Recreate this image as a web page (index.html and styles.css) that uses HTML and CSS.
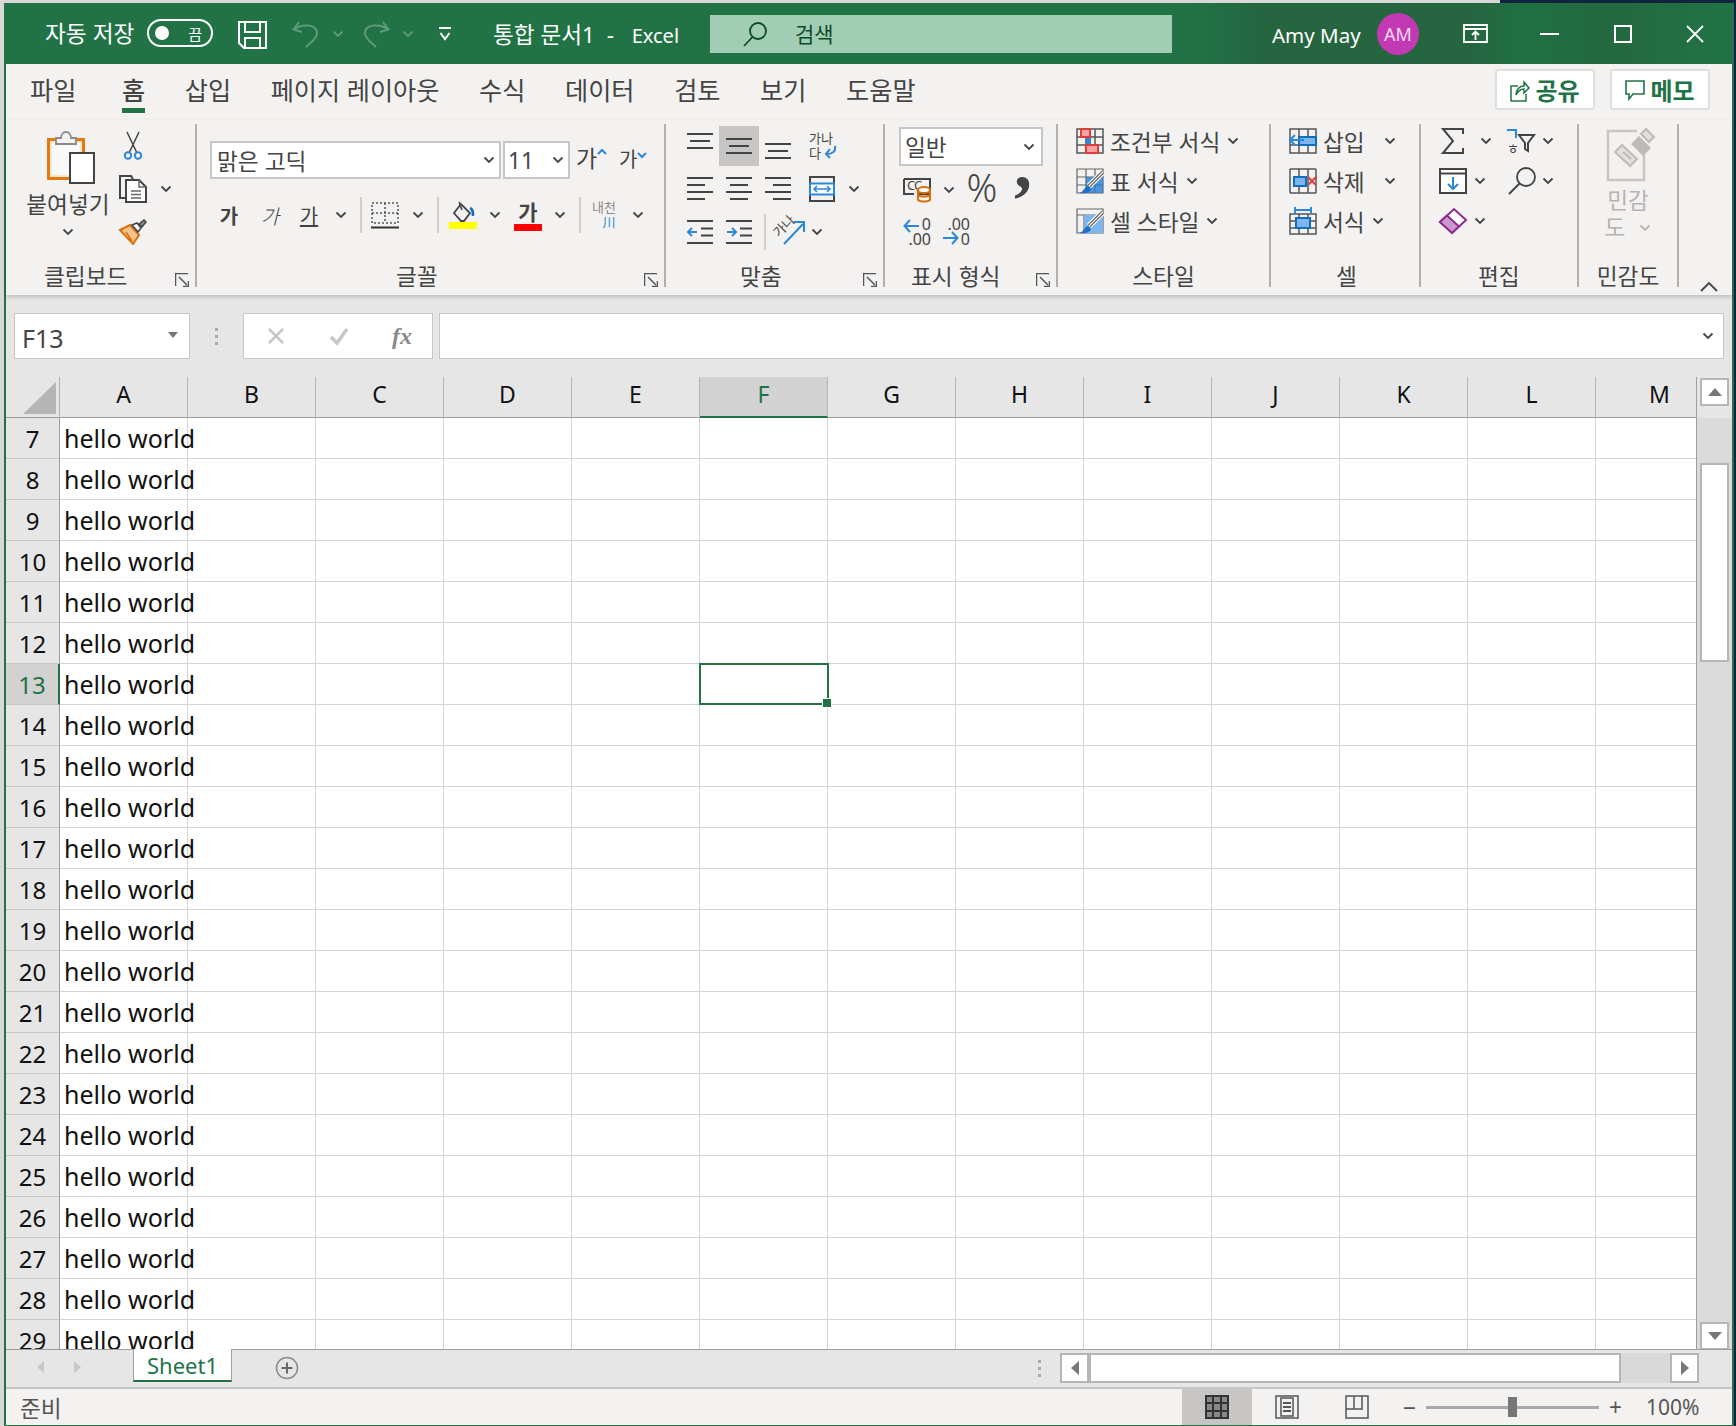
FILE: index.html
```html
<!DOCTYPE html>
<html lang="ko">
<head>
	<meta charset="UTF-8">
	<title>통합 문서1 - Excel</title>
	<link rel="stylesheet" href="styles.css">
</head>
<body>
<svg class="sprite">
	<symbol id="chev" viewBox="0 0 12 8"><path d="M1.5 1.5 6 6l4.5-4.5" fill="none" stroke="currentColor" stroke-width="1.8"/></symbol>
	<symbol id="launcher" viewBox="0 0 14 14"><path d="M.5 13V.5H13M13.500 8v5.500H8M4 4l8 8" fill="none" stroke="#555" stroke-width="1.500"/></symbol>
</svg>
<div class="window">
	<!-- title bar -->
	<div class="titlebar">
		<span class="autosave">자동 저장</span>
		<span class="toggle"><i></i><b>끔</b></span>
		<svg class="t-save" width="29" height="28" viewBox="0 0 29 28"><path d="M1 1h27v26H6l-5-5zM7 1v10h15V1M7 27V17h15v10M7 17h15" fill="none" stroke="#fff" stroke-width="2"/></svg>
		<svg class="t-undo" width="27" height="28" viewBox="0 0 27 28"><path d="M7 2 1.500 9.500 10 12M2 9.500C8 4 25 3 25 13c0 6-7 10-11 14" fill="none" stroke="#5d9b7a" stroke-width="2"/></svg>
		<svg class="t-chev1 chev dim"><use href="#chev"/></svg>
		<svg class="t-redo" width="27" height="28" viewBox="0 0 27 28"><path d="M20 2l5.500 7.500L17 12M25 9.500C19 4 2 3 2 13c0 6 7 10 11 14" fill="none" stroke="#5d9b7a" stroke-width="2"/></svg>
		<svg class="t-chev2 chev dim"><use href="#chev"/></svg>
		<svg class="t-custom" width="14" height="16" viewBox="0 0 14 16"><path d="M1 2h12" stroke="#fff" stroke-width="2"/><path d="M2.500 7 7 13l4.500-6" fill="none" stroke="#fff" stroke-width="2"/></svg>
		<span class="doc-title">통합 문서1&nbsp; - &nbsp;<span class="app-name">Excel</span></span>
		<div class="search">
			<svg width="26" height="26" viewBox="0 0 26 26"><circle cx="16" cy="10" r="8" fill="none" stroke="#0d4a2a" stroke-width="1.800"/><path d="M10.500 16 2 25" stroke="#0d4a2a" stroke-width="1.800"/></svg>
			<span>검색</span>
		</div>
		<span class="user">Amy May</span>
		<span class="avatar">AM</span>
		<svg class="t-display" width="25" height="19" viewBox="0 0 25 19"><path d="M1 1h23v17H1zM1 5h23M12.500 16V8M9 11l3.500-3.500L16 11" fill="none" stroke="#fff" stroke-width="1.800"/></svg>
		<svg class="t-min" width="19" height="2" viewBox="0 0 19 2"><path d="M0 1h19" stroke="#fff" stroke-width="2"/></svg>
		<svg class="t-max" width="18" height="18" viewBox="0 0 18 18"><path d="M1 1h16v16H1z" fill="none" stroke="#fff" stroke-width="2"/></svg>
		<svg class="t-close" width="18" height="18" viewBox="0 0 18 18"><path d="M1 1l16 16M17 1 1 17" stroke="#fff" stroke-width="1.800"/></svg>
	</div>

	<!-- ribbon tabs -->
	<div class="tabs">
		<a class="tab first">파일</a>
		<a class="tab active">홈</a>
		<a class="tab">삽입</a>
		<a class="tab">페이지 레이아웃</a>
		<a class="tab">수식</a>
		<a class="tab">데이터</a>
		<a class="tab">검토</a>
		<a class="tab">보기</a>
		<a class="tab">도움말</a>
		<div class="tab-actions">
			<button class="pill"><svg width="20" height="24" viewBox="0 0 20 24"><path d="M8 8H1v15h15v-7" fill="none" stroke="#217346" stroke-width="1.500"/><path d="M6 17c0-6 4-9 8-9V4l5 6-5 5v-4c-3 0-6 2-8 6z" fill="none" stroke="#217346" stroke-width="1.500"/></svg>공유</button>
			<button class="pill"><svg width="20" height="24" viewBox="0 0 20 24"><path d="M1 3h18v13H8l-4 5v-5H1z" fill="none" stroke="#217346" stroke-width="1.600"/></svg>메모</button>
		</div>
	</div>

	<!-- ribbon -->
	<div class="ribbon">
		<section class="group g-clip">
			<div class="group-body clip-body">
				<div class="paste">
					<svg width="48" height="54" viewBox="0 0 48 54"><path d="M1.500 9.500h35v39h-35z" fill="#fbe7c8" stroke="#e07b12" stroke-width="3"/><path d="M5 13h28v32H5z" fill="#f8f8f8"/><path d="M9 14V8h5c0-8 10-8 10 0h5v6z" fill="#f3f2f1" stroke="#8a8a8a" stroke-width="1.800"/><path d="M23 23h24v30H23z" fill="#fff" stroke="#444" stroke-width="2"/></svg>
					<span class="paste-label">붙여넣기</span>
					<svg class="chev"><use href="#chev"/></svg>
				</div>
				<div class="clip-tools">
					<span class="cmd"><svg width="18" height="28" viewBox="0 0 18 28"><path d="M3 0l9.500 20M15 0 5.500 20" fill="none" stroke="#444" stroke-width="1.500"/><circle cx="4" cy="23.500" r="3.200" fill="none" stroke="#2b88d8" stroke-width="2"/><circle cx="14" cy="23.500" r="3.200" fill="none" stroke="#2b88d8" stroke-width="2"/></svg></span>
					<span></span>
					<span class="cmd"><svg width="28" height="28" viewBox="0 0 28 28"><path d="M8 23H1V1h11l2 3" fill="none" stroke="#444" stroke-width="2"/><path d="M7 5h13l7 7v15H7z" fill="#fff" stroke="#444" stroke-width="2"/><path d="M20 5v7h7M12 16h10M12 19.500h10M12 23h10" fill="none" stroke="#666" stroke-width="1.500"/></svg></span>
					<span class="cmd"><svg class="chev"><use href="#chev"/></svg></span>
					<span class="cmd"><svg width="28" height="26" viewBox="0 0 28 26"><path d="M1 11l10-5 9 10-6 9z" fill="#f7c68f" stroke="#dc6f0c" stroke-width="2"/><path d="M7 13l6 9" stroke="#dc6f0c" stroke-width="1.500"/><path d="M13 6l5-2 4 5-3 4z" fill="#fff" stroke="#444" stroke-width="1.500"/><path d="M20 5l5-4 2 2-4 5z" fill="#888" stroke="#444" stroke-width="1.500"/></svg></span>
				</div>
			</div>
			<div class="group-foot"><span class="label">클립보드</span><svg class="launcher"><use href="#launcher"/></svg></div>
		</section>

		<section class="group g-font">
			<div class="group-body font-body">
				<div class="font-row1">
					<div class="combo font-name"><span>맑은 고딕</span><svg class="chev"><use href="#chev"/></svg></div>
					<div class="combo font-size"><span>11</span><svg class="chev"><use href="#chev"/></svg></div>
					<span class="grow">가<svg width="10" height="7" viewBox="0 0 10 7"><path d="M1 6l4-4 4 4" fill="none" stroke="#2b88d8" stroke-width="2"/></svg></span>
					<span class="grow shrink">가<svg width="10" height="7" viewBox="0 0 10 7"><path d="M1 1l4 4 4-4" fill="none" stroke="#2b88d8" stroke-width="2"/></svg></span>
				</div>
				<div class="font-row2">
					<span class="cmd glyph bold">가</span>
					<span class="cmd glyph italic">가</span>
					<span class="cmd glyph under">가</span>
					<span class="cmd"><svg class="chev"><use href="#chev"/></svg></span>
					<span class="cmd"><i class="vsep"></i></span>
					<span class="cmd"><svg width="28" height="27" viewBox="0 0 28 27"><path d="M1 1h26v20H1zM14 1v20M1 11h26" fill="none" stroke="#555" stroke-width="1.500" stroke-dasharray="2 2"/><path d="M0 25.500h28" stroke="#333" stroke-width="2"/></svg></span>
					<span class="cmd"><svg class="chev"><use href="#chev"/></svg></span>
					<span class="cmd"><i class="vsep"></i></span>
					<span class="cmd"><svg width="28" height="28" viewBox="0 0 28 28"><path d="M5 12 12 3l9 9-6 8h-3z" fill="none" stroke="#444" stroke-width="1.800"/><path d="M10 1l3 8" stroke="#444" stroke-width="1.500"/><path d="M21 7c3 1 3 4 3 8" fill="none" stroke="#106ebe" stroke-width="2.500"/><path d="M0 21h28v7H0z" fill="#ff0"/></svg></span>
					<span class="cmd"><svg class="chev"><use href="#chev"/></svg></span>
					<span class="cmd color-a">가<i></i></span>
					<span class="cmd"><svg class="chev"><use href="#chev"/></svg></span>
					<span class="cmd"><i class="vsep"></i></span>
					<span class="cmd phon">내천<b>川</b></span>
					<span class="cmd"><svg class="chev"><use href="#chev"/></svg></span>
				</div>
			</div>
			<div class="group-foot"><span class="label">글꼴</span><svg class="launcher"><use href="#launcher"/></svg></div>
		</section>

		<section class="group g-align">
			<div class="group-body align-body">
				<span class="cmd"><svg class="al" viewBox="0 0 26 26"><path d="M0 1h26M3 8h20M0 15h26"/></svg></span>
				<span class="cmd picked"><svg class="al" viewBox="0 0 26 26"><path d="M0 6h26M3 13h20M0 20h26"/></svg></span>
				<span class="cmd"><svg class="al" viewBox="0 0 26 26"><path d="M0 11h26M3 18h20M0 25h26"/></svg></span>
				<span class="cmd"><svg width="28" height="28" viewBox="0 0 28 28"><text x="1" y="11" class="mini">가나</text><text x="1" y="26" class="mini">다</text><path d="M27 14c1 5-2 8-8 8M22 17l-4 5 4 4" fill="none" stroke="#2b88d8" stroke-width="2"/></svg></span>
				<span></span>

				<span class="cmd"><svg class="al" viewBox="0 0 26 26"><path d="M0 2h26M0 9h18M0 16h26M0 23h18"/></svg></span>
				<span class="cmd"><svg class="al" viewBox="0 0 26 26"><path d="M0 2h26M4 9h18M0 16h26M4 23h18"/></svg></span>
				<span class="cmd"><svg class="al" viewBox="0 0 26 26"><path d="M0 2h26M8 9h18M0 16h26M8 23h18"/></svg></span>
				<span class="cmd"><svg width="26" height="26" viewBox="0 0 26 26"><path d="M1 1h24v24H1z" fill="none" stroke="#444" stroke-width="2"/><path d="M1 7.500h24v11H1z" fill="#fff" stroke="#2b88d8" stroke-width="2"/><path d="M5 13h16M8 10l-3 3 3 3M18 10l3 3-3 3" fill="none" stroke="#2b88d8" stroke-width="1.500"/></svg></span>
				<span class="cmd"><svg class="chev"><use href="#chev"/></svg></span>

				<div class="align-row3">
					<span class="cmd"><svg width="26" height="26" viewBox="0 0 26 26"><path d="M0 2h26M14 9.500h12M14 16.500h12M0 24h26" stroke="#444" stroke-width="2"/><path d="M10 13H1M5 9l-4 4 4 4" fill="none" stroke="#2b88d8" stroke-width="2"/></svg></span>
					<span class="cmd"><svg width="26" height="26" viewBox="0 0 26 26"><path d="M0 2h26M14 9.500h12M14 16.500h12M0 24h26" stroke="#444" stroke-width="2"/><path d="M1 13h9M6 9l4 4-4 4" fill="none" stroke="#2b88d8" stroke-width="2"/></svg></span>
					<span class="cmd"><i class="vsep"></i></span>
					<span class="cmd"><svg width="30" height="26" viewBox="0 0 30 26"><text x="0" y="14" class="mini" transform="rotate(-45 8 12)">가나</text><path d="M9 25 28 5M19 3h10v10" fill="none" stroke="#2b88d8" stroke-width="2"/></svg></span>
					<span class="cmd"><svg class="chev"><use href="#chev"/></svg></span>
				</div>
			</div>
			<div class="group-foot"><span class="label">맞춤</span><svg class="launcher"><use href="#launcher"/></svg></div>
		</section>

		<section class="group g-number">
			<div class="group-body number-body">
				<div class="combo num-format"><span>일반</span><svg class="chev"><use href="#chev"/></svg></div>
				<div class="num-row2">
					<span class="cmd"><svg width="28" height="24" viewBox="0 0 28 24"><path d="M1 1h26v15H16M1 1v15h10" fill="none" stroke="#444" stroke-width="2"/><text x="4" y="12" class="mini">C</text><text x="11" y="12" class="mini">C</text><ellipse cx="21" cy="12" rx="6" ry="3" fill="#fff" stroke="#dc6f0c" stroke-width="2"/><path d="M15 12v10c2 2 10 2 12 0V12M15 17c2 2 10 2 12 0" fill="none" stroke="#dc6f0c" stroke-width="2"/></svg></span>
					<span class="cmd"><svg class="chev"><use href="#chev"/></svg></span>
					<span class="cmd percent">%</span>
					<span class="cmd comma">,</span>
				</div>
				<div class="num-row3">
					<span class="cmd"><svg width="28" height="27" viewBox="0 0 28 27"><path d="M16 8H2M7 2 1.500 8 7 14" fill="none" stroke="#2b88d8" stroke-width="2"/><text x="28" y="12" class="dec">0</text><text x="28" y="27" class="dec">.00</text></svg></span>
					<span class="cmd"><svg width="28" height="27" viewBox="0 0 28 27"><text x="28" y="12" class="dec">.00</text><path d="M1 20h14M10 14l5.500 6-5.500 6" fill="none" stroke="#2b88d8" stroke-width="2"/><text x="28" y="27" class="dec">0</text></svg></span>
				</div>
			</div>
			<div class="group-foot"><span class="label">표시 형식</span><svg class="launcher"><use href="#launcher"/></svg></div>
		</section>

		<section class="group g-styles">
			<div class="group-body cmd-list">
				<div class="cmd-line">
					<svg width="28" height="26" viewBox="0 0 28 26"><path d="M1 1h26v24H1zM10 1v24M19 1v24M1 9h26M1 17h26" fill="none" stroke="#555" stroke-width="1.500"/><path d="M10 9h5v8h-5z" fill="#2b88d8"/><path d="M5 1h9v8H5zM10 17h12v8H10z" fill="#f9a3a3" stroke="#e03c3c" stroke-width="2"/></svg>
					<span>조건부 서식</span><svg class="chev"><use href="#chev"/></svg>
				</div>
				<div class="cmd-line">
					<svg width="28" height="26" viewBox="0 0 28 26"><path d="M1 1h26v24H1zM10 1v24M19 1v24M1 9h26M1 17h26" fill="none" stroke="#666" stroke-width="1.200"/><path d="M10 9h17v16H10z" fill="#2b7cd3" opacity=".8"/><path d="M27 4 13 18" stroke="#fff" stroke-width="6"/><path d="M27 4 13 18" stroke="#555" stroke-width="3.500"/><path d="M27 4 13 18" stroke="#fff" stroke-width="1.200"/><path d="M12 18c-4 1-4 6-9 7 5 1 11 0 12-4z" fill="#1f6fc4"/></svg>
					<span>표 서식</span><svg class="chev"><use href="#chev"/></svg>
				</div>
				<div class="cmd-line">
					<svg width="28" height="26" viewBox="0 0 28 26"><path d="M1 1h26v24H1zM1 7h26M8 7v18" fill="none" stroke="#666" stroke-width="1.200"/><path d="M8 7h19v18H8z" fill="#7db6ec"/><path d="M27 4 13 18" stroke="#fff" stroke-width="6"/><path d="M27 4 13 18" stroke="#555" stroke-width="3.500"/><path d="M27 4 13 18" stroke="#fff" stroke-width="1.200"/><path d="M12 18c-4 1-4 6-9 7 5 1 11 0 12-4z" fill="#1f6fc4"/></svg>
					<span>셀 스타일</span><svg class="chev"><use href="#chev"/></svg>
				</div>
			</div>
			<div class="group-foot"><span class="label">스타일</span></div>
		</section>

		<section class="group g-cells">
			<div class="group-body cmd-list">
				<div class="cmd-line">
					<svg width="28" height="26" viewBox="0 0 28 26"><path d="M1 1h26v24H1zM10 1v24M19 1v24M1 17h26" fill="none" stroke="#555" stroke-width="1.500"/><path d="M10 9h17v8H10z" fill="#7db6ec" stroke="#106ebe" stroke-width="2"/><path d="M15 12H2M6 7l-5 5 5 5" fill="none" stroke="#2b88d8" stroke-width="2"/></svg>
					<span class="cell-text">삽입</span><svg class="chev"><use href="#chev"/></svg>
				</div>
				<div class="cmd-line">
					<svg width="28" height="26" viewBox="0 0 28 26"><path d="M1 1h26M1 25h26M1 1v24M10 1v24M19 1v24M27 1v24" fill="none" stroke="#555" stroke-width="1.500"/><path d="M5 9h12v9H5z" fill="#7db6ec" stroke="#106ebe" stroke-width="2"/><path d="M19 9l8 8M27 9l-8 8" stroke="#e83b3b" stroke-width="2"/></svg>
					<span class="cell-text">삭제</span><svg class="chev"><use href="#chev"/></svg>
				</div>
				<div class="cmd-line">
					<svg width="28" height="28" viewBox="0 0 28 28"><path d="M1 7h26v20H1zM10 7v20M19 7v20M1 14h26M1 21h26" fill="none" stroke="#555" stroke-width="1.500"/><path d="M7 11h14v10H7z" fill="#7db6ec" stroke="#106ebe" stroke-width="2"/><path d="M6 3h16M6 0v6M22 0v6" fill="none" stroke="#2b88d8" stroke-width="2"/></svg>
					<span>서식</span><svg class="chev"><use href="#chev"/></svg>
				</div>
			</div>
			<div class="group-foot"><span class="label">셀</span></div>
		</section>

		<section class="group g-edit">
			<div class="group-body edit-body">
				<div class="edit-row">
					<span class="cmd"><svg width="22" height="26" viewBox="0 0 22 26"><path d="M21 6V1H1l10 12L1 25h20v-5" fill="none" stroke="#444" stroke-width="2"/></svg></span>
					<span class="cmd"><svg class="chev"><use href="#chev"/></svg></span>
					<span class="cmd"><svg width="28" height="26" viewBox="0 0 28 26"><path d="M0 2h9v8" fill="none" stroke="#2b88d8" stroke-width="2"/><text x="0" y="25" class="mini">ㅎ</text><path d="M12 7h15l-6 8v8l-3-2v-6z" fill="none" stroke="#444" stroke-width="2"/></svg></span>
					<span class="cmd"><svg class="chev"><use href="#chev"/></svg></span>
				</div>
				<div class="edit-row row2">
					<span class="cmd"><svg width="28" height="26" viewBox="0 0 28 26"><path d="M1 1h26v24H1z" fill="#fff" stroke="#444" stroke-width="2"/><path d="M1 5.500h26" stroke="#444" stroke-width="2"/><path d="M14 9v12M9 16l5 5 5-5" fill="none" stroke="#2b88d8" stroke-width="2"/></svg></span>
					<span class="cmd"><svg class="chev"><use href="#chev"/></svg></span>
					<span class="cmd find"><svg width="28" height="28" viewBox="0 0 28 28"><circle cx="18" cy="10" r="9" fill="none" stroke="#444" stroke-width="1.800"/><path d="M11.500 16.500 1 27" stroke="#444" stroke-width="2"/></svg></span>
					<span class="cmd"><svg class="chev"><use href="#chev"/></svg></span>
				</div>
				<div class="edit-row row3">
					<span class="cmd"><svg width="28" height="26" viewBox="0 0 28 26"><path d="M1 14 15 1l12 11-14 13z" fill="#fff" stroke="#92288f" stroke-width="2"/><path d="M1 14l7-6.500 12 11-7 6.500z" fill="#c89bd0" stroke="#92288f" stroke-width="2"/></svg></span>
					<span class="cmd"><svg class="chev"><use href="#chev"/></svg></span>
				</div>
			</div>
			<div class="group-foot"><span class="label">편집</span></div>
		</section>

		<section class="group g-sens">
			<div class="group-body sens-body">
				<svg width="48" height="53" viewBox="0 0 48 53"><path d="M30 3H1v49h36V27" fill="none" stroke="#c8c6c4" stroke-width="2.500"/><path d="M8 24 23 38l7-7-15-14z" fill="#e1dfdd" stroke="#bdbbb9" stroke-width="2"/><path d="M16 24l8 7" stroke="#bdbbb9" stroke-width="2"/><path d="M24 16l8-8 12 12-8 8z" fill="#bdbbb9"/><path d="M34 6l5-5 8 8-5 5z" fill="#e1dfdd" stroke="#bdbbb9" stroke-width="2"/></svg>
				<span class="sens-text">민감</span>
				<span class="sens-text last">도<svg class="chev"><use href="#chev"/></svg></span>
			</div>
			<div class="group-foot"><span class="label">민감도</span></div>
		</section>

		<svg class="collapse" width="18" height="10" viewBox="0 0 18 10"><path d="M1 9l8-8 8 8" fill="none" stroke="#444" stroke-width="1.800"/></svg>
	</div>

	<!-- formula bar -->
	<div class="formula">
		<div class="namebox"><span>F13</span><i class="down-tri"></i></div>
		<div class="f-grip"><i></i><i></i><i></i></div>
		<div class="f-buttons">
			<svg width="18" height="18" viewBox="0 0 18 18"><path d="M2 2l14 14M16 2 2 16" stroke="#c8c6c4" stroke-width="2.500"/></svg>
			<svg width="20" height="18" viewBox="0 0 20 18"><path d="M2 10l6 6L18 2" fill="none" stroke="#c8c6c4" stroke-width="3.500"/></svg>
			<span class="fx">fx</span>
		</div>
		<div class="f-input"><svg class="chev"><use href="#chev"/></svg></div>
	</div>

	<!-- sheet -->
	<div class="sheet">
		<div class="grid">
			<div class="col-heads">
				<div class="corner"><i></i></div>
				<div class="col-head">A</div>
				<div class="col-head">B</div>
				<div class="col-head">C</div>
				<div class="col-head">D</div>
				<div class="col-head">E</div>
				<div class="col-head on">F</div>
				<div class="col-head">G</div>
				<div class="col-head">H</div>
				<div class="col-head">I</div>
				<div class="col-head">J</div>
				<div class="col-head">K</div>
				<div class="col-head">L</div>
				<div class="col-head">M</div>
			</div>
			<div class="row"><div class="row-num">7</div><div class="cells">hello world</div></div>
			<div class="row"><div class="row-num">8</div><div class="cells">hello world</div></div>
			<div class="row"><div class="row-num">9</div><div class="cells">hello world</div></div>
			<div class="row"><div class="row-num">10</div><div class="cells">hello world</div></div>
			<div class="row"><div class="row-num">11</div><div class="cells">hello world</div></div>
			<div class="row"><div class="row-num">12</div><div class="cells">hello world</div></div>
			<div class="row"><div class="row-num on">13</div><div class="cells">hello world</div></div>
			<div class="row"><div class="row-num">14</div><div class="cells">hello world</div></div>
			<div class="row"><div class="row-num">15</div><div class="cells">hello world</div></div>
			<div class="row"><div class="row-num">16</div><div class="cells">hello world</div></div>
			<div class="row"><div class="row-num">17</div><div class="cells">hello world</div></div>
			<div class="row"><div class="row-num">18</div><div class="cells">hello world</div></div>
			<div class="row"><div class="row-num">19</div><div class="cells">hello world</div></div>
			<div class="row"><div class="row-num">20</div><div class="cells">hello world</div></div>
			<div class="row"><div class="row-num">21</div><div class="cells">hello world</div></div>
			<div class="row"><div class="row-num">22</div><div class="cells">hello world</div></div>
			<div class="row"><div class="row-num">23</div><div class="cells">hello world</div></div>
			<div class="row"><div class="row-num">24</div><div class="cells">hello world</div></div>
			<div class="row"><div class="row-num">25</div><div class="cells">hello world</div></div>
			<div class="row"><div class="row-num">26</div><div class="cells">hello world</div></div>
			<div class="row"><div class="row-num">27</div><div class="cells">hello world</div></div>
			<div class="row"><div class="row-num">28</div><div class="cells">hello world</div></div>
			<div class="row"><div class="row-num">29</div><div class="cells">hello world</div></div>
			<div class="active-cell"><i></i></div>
		</div>
		<div class="vscroll">
			<div class="sbtn"><i class="tri-up"></i></div>
			<div class="vthumb"></div>
			<div class="sbtn down"><i class="tri-down"></i></div>
		</div>
	</div>

	<!-- sheet tabs -->
	<div class="sheetbar">
		<i class="nav-left"></i>
		<i class="nav-right"></i>
		<div class="sheet-tab">Sheet1</div>
		<svg class="add-sheet" width="24" height="24" viewBox="0 0 24 24"><circle cx="12" cy="12" r="10.500" fill="none" stroke="#8a8a8a" stroke-width="1.500"/><path d="M12 6.500v11M6.500 12h11" stroke="#666" stroke-width="2"/></svg>
		<div class="h-grip"><i></i><i></i><i></i></div>
		<div class="hscroll">
			<div class="sbtn h"><i class="tri-left"></i></div>
			<div class="hthumb"></div>
			<div class="sbtn h"><i class="tri-right"></i></div>
		</div>
	</div>

	<!-- status bar -->
	<div class="statusbar">
		<span class="ready">준비</span>
		<div class="view on"><svg width="24" height="24" viewBox="0 0 24 24"><path d="M1 1h22v22H1zM8 1v22M16 1v22M1 8h22M1 16h22" fill="#888" stroke="#333" stroke-width="2"/></svg></div>
		<div class="view"><svg width="24" height="24" viewBox="0 0 24 24"><path d="M1 1h22v22H1zM6 3h12v18H6z" fill="none" stroke="#555" stroke-width="1.500"/><path d="M8 8h8M8 12h8M8 16h8" stroke="#555" stroke-width="2"/></svg></div>
		<div class="view"><svg width="24" height="24" viewBox="0 0 24 24"><path d="M1 1h22v22H1zM1 14h16V1M9 1v13" fill="none" stroke="#555" stroke-width="1.500"/></svg></div>
		<span class="zoom-sign">−</span>
		<div class="slider"><i></i></div>
		<span class="zoom-sign plus">+</span>
		<span class="zoom-val">100%</span>
	</div>
</div>
</body>
</html>
```
FILE: styles.css
```css
*{
	margin: 0;
	padding: 0;
	box-sizing: border-box;
}
html,body{
	height: 1426px;
	overflow: hidden;
}
body{
	background: linear-gradient(90deg, #d8d8d8 0, #d8d8d8 1500px, #10233f 1500px);
	font-family: "Noto Sans", "Noto Sans CJK KR", sans-serif;
	color: #444;
	font-size: 22.7px;
}
i{
	font-style: normal;
	display: block;
}
svg{
	overflow: visible;
}
.sprite{
	display: none;
}
.chev{
	width: 12px;
	height: 8px;
	color: #444;
	flex: none;
}
.chev.dim{
	color: #5d9b7a;
}
.window{
	width: 1730px;
	height: 1423px;
	margin: 3px 0 0 4px;
	border-left: 2px solid #217346;
	border-right: 2px solid #217346;
	border-bottom: 1px solid #217346;
	display: flex;
	flex-direction: column;
	background: #f3f2f1;
}

/* title bar */
.titlebar{
	height: 61px;
	flex: none;
	display: flex;
	align-items: center;
	padding-left: 39px;
	color: #fff;
	background: linear-gradient(90deg, #217346 0, #217346 1180px, #256640 1250px, #256640 1470px, #1f7042 1520px, #24683f 1600px, #217346 1726px);
}
.autosave{
	width: 102px;
	white-space: nowrap;
	margin-bottom: 3px;
}
.toggle{
	width: 66px;
	height: 28px;
	border: 2px solid #fff;
	border-radius: 14px;
	display: flex;
	align-items: center;
	justify-content: space-between;
	padding: 0 9px 0 6px;
	margin-bottom: 1px;
}
.toggle i{
	width: 14px;
	height: 14px;
	border-radius: 50%;
	background: #fff;
}
.toggle b{
	font-size: 15px;
	font-weight: 400;
}
.t-save{
	margin-left: 25px;
	margin-top: 2px;
}
.t-undo{
	margin-left: 25px;
}
.t-chev1{
	margin-left: 13px;
}
.t-redo{
	margin-left: 19px;
}
.t-chev2{
	margin-left: 12px;
}
.t-custom{
	margin-left: 24px;
}
.doc-title{
	margin-left: 41px;
	width: 217px;
	white-space: nowrap;
	font-size: 22.6px;
	margin-bottom: 1px;
}
.app-name{
	font-size: 20px;
	margin-left: 6px;
}
.search{
	width: 462px;
	height: 38px;
	margin-top: 1px;
	background: #a1cdb5;
	display: flex;
	align-items: center;
	padding-left: 32px;
	gap: 27px;
	color: #0d4a2a;
	font-size: 21px;
}
.search span{
	margin-bottom: 2px;
}
.user{
	margin-left: 100px;
	width: 105px;
	white-space: nowrap;
	font-size: 20.5px;
	margin-top: 2px;
}
.avatar{
	width: 42px;
	height: 42px;
	border-radius: 50%;
	background: #c239b3;
	color: #f5d9f1;
	font-size: 18px;
	display: flex;
	align-items: center;
	justify-content: center;
}
.t-display{
	margin-left: 44px;
}
.t-min{
	margin-left: 52px;
}
.t-max{
	margin-left: 55px;
}
.t-close{
	margin-left: 54px;
}

/* ribbon tabs */
.tabs{
	height: 56px;
	flex: none;
	display: flex;
	align-items: flex-start;
	padding-left: 24px;
	gap: 39.6px;
	font-size: 25.2px;
	color: #444;
}
.tab{
	height: 49px;
	line-height: 53px;
	white-space: nowrap;
	position: relative;
}
.tab.first{
	margin-right: 6px;
}
.tab.active{
	font-weight: 500;
	border-bottom: 5px solid #217346;
}
.tab-actions{
	margin-left: auto;
	display: flex;
	gap: 15px;
	padding: 5px 22px 0 0;
}
.pill{
	width: 100px;
	height: 41px;
	border: 2px solid #e1dfdd;
	border-radius: 3px;
	background: #fff;
	font: 700 24px "Noto Sans", "Noto Sans CJK KR", sans-serif;
	color: #217346;
	display: flex;
	align-items: center;
	justify-content: center;
	gap: 5px;
}

/* ribbon */
.ribbon{
	height: 175px;
	flex: none;
	display: flex;
	padding-top: 4px;
	position: relative;
	z-index: 1;
	box-shadow: 0 2px 4px rgba(0,0,0,.18);
}
.group{
	height: 163px;
	border-right: 2px solid #b3b0ad;
	display: flex;
	flex-direction: column;
	flex: none;
}
.group-body{
	height: 141px;
}
.group-foot{
	height: 22px;
	display: flex;
	align-items: center;
	justify-content: space-between;
	color: #444;
	padding-right: 6px;
}
.label{
	white-space: nowrap;
	margin-top: -2px;
}
.launcher{
	width: 14px;
	height: 14px;
	margin-top: 7px;
}
.cmd{
	display: flex;
	align-items: center;
	justify-content: center;
}
.vsep{
	width: 2px;
	height: 36px;
	background: #d2d0ce;
}
.mini{
	font-size: 13px;
	fill: #444;
}
.dec{
	font-size: 16px;
	fill: #444;
	text-anchor: end;
}
.combo{
	background: #fff;
	border: 2px solid #c6c6c6;
	display: flex;
	align-items: center;
	justify-content: space-between;
}

/* clipboard */
.g-clip{
	width: 191px;
}
.g-clip .group-foot{
	padding-left: 38px;
}
.clip-body{
	display: flex;
}
.paste{
	width: 84px;
	margin-left: 20px;
	padding-top: 6px;
	display: flex;
	flex-direction: column;
	align-items: center;
}
.paste svg:first-child{
	margin-left: 6px;
}
.paste-label{
	line-height: 28px;
	margin-top: 7px;
	white-space: nowrap;
}
.paste .chev{
	margin-top: 9px;
}
.clip-tools{
	display: grid;
	grid-template-columns: 46px 20px;
	grid-auto-rows: 43px;
}

/* font */
.g-font{
	width: 469px;
}
.g-font .group-foot{
	padding-left: 199px;
}
.font-body{
	padding: 17px 0 0 13px;
}
.font-row1{
	display: flex;
	align-items: center;
	height: 38px;
}
.font-name{
	width: 291px;
	height: 38px;
	padding: 0 4px 0 5px;
	margin-right: 2px;
}
.font-size{
	width: 67px;
	height: 38px;
	padding: 0 4px 0 3px;
}
.grow{
	width: 40px;
	padding-left: 6px;
	display: flex;
	align-items: flex-start;
	font-size: 23px;
	margin-bottom: 7px;
}
.grow svg{
	margin-top: 8px;
}
.grow.shrink{
	width: 44px;
	padding-left: 9px;
	font-size: 20px;
	margin-bottom: 4px;
}
.font-row2{
	display: grid;
	grid-template-columns: 38px 44px 34px 30px 10px 38px 28px 12px 38px 26px 40px 24px 16px 32px 36px;
	height: 36px;
	margin-top: 18px;
}
.glyph{
	font-size: 20px;
}
.bold{
	font-weight: 700;
}
.italic{
	font-style: italic;
	font-weight: 300;
}
.under{
	text-decoration: underline;
}
.color-a{
	flex-direction: column;
	font-weight: 700;
	font-size: 21px;
	line-height: 24px;
}
.color-a i{
	width: 28px;
	height: 7px;
	background: #f00;
}
.phon{
	flex-direction: column;
	font-size: 13px;
	line-height: 15px;
	color: #888;
}
.phon b{
	font-weight: 400;
	color: #2b88d8;
	padding-left: 10px;
}

/* alignment */
.g-align{
	width: 219px;
}
.g-align .group-foot{
	padding-left: 74px;
}
.align-body{
	display: grid;
	grid-template-columns: 39px 40px 38px 50px 14px;
	grid-auto-rows: 43px;
	padding-left: 14px;
}
.al{
	width: 26px;
	height: 26px;
	fill: none;
	stroke: #444;
	stroke-width: 2;
}
.picked{
	height: 40px;
	margin-top: 2px;
	background: #c8c6c4;
}
.align-row3{
	grid-column: 1 / -1;
	display: grid;
	grid-template-columns: 39px 40px 12px 38px 16px;
}

/* number */
.g-number{
	width: 173px;
}
.g-number .group-foot{
	padding-left: 26px;
}
.number-body{
	padding: 3px 0 0 14px;
}
.num-format{
	width: 144px;
	height: 39px;
	padding: 0 6px 0 4px;
}
.num-row2{
	display: grid;
	grid-template-columns: 36px 28px 38px 44px;
	grid-template-rows: 40px;
	height: 40px;
	margin-top: 4px;
}
.percent{
	font-size: 38px;
	font-weight: 300;
	line-height: 40px;
	padding-bottom: 6px;
}
.comma{
	font: 700 72px "Liberation Serif", serif;
	line-height: 40px;
	height: 40px;
	transform: translateY(-26px);
}
.num-row3{
	display: grid;
	grid-template-columns: 35px 44px;
	height: 40px;
	margin-top: 1px;
}

/* styles and cells */
.g-styles{
	width: 213px;
}
.g-styles .group-foot{
	justify-content: center;
	padding: 0;
}
.g-cells{
	width: 150px;
}
.g-cells .group-foot{
	padding-left: 65px;
}
.cmd-list{
	display: grid;
	grid-template-rows: 34px 46px 34px;
	padding-left: 18px;
}
.cmd-line{
	display: flex;
	align-items: center;
	white-space: nowrap;
}
.cmd-line span{
	margin: 0 7px 0 6px;
}
.cell-text{
	width: 54px;
}

/* editing */
.g-edit{
	width: 158px;
}
.g-edit .group-foot{
	padding-left: 57px;
}
.edit-body{
	display: grid;
	grid-template-rows: 34px 46px 34px;
	padding-left: 16px;
}
.edit-row{
	display: grid;
	grid-template-columns: 31px 36px 34px 20px;
}
.edit-row.row2{
	grid-template-columns: 31px 24px 46px 20px;
}
.edit-row.row2 .find{
	padding-left: 13px;
}
.edit-row.row3{
	grid-template-columns: 31px 24px;
}

/* sensitivity */
.g-sens{
	width: 100px;
}
.g-sens .group-foot{
	justify-content: center;
	padding: 0;
}
.sens-body{
	display: flex;
	flex-direction: column;
	align-items: center;
	padding-top: 4px;
	color: #b5b3b1;
}
.sens-body svg:first-child{
	margin-left: 6px;
}
.sens-text{
	line-height: 27px;
	margin-top: 6px;
}
.sens-text.last{
	margin-top: 0;
	display: flex;
	align-items: center;
	gap: 8px;
}
.sens-text .chev{
	color: #b5b3b1;
}
.collapse{
	align-self: flex-end;
	margin: 0 0 3px 21px;
}

/* formula bar */
.formula{
	height: 82px;
	flex: none;
	background: #e6e6e6;
	display: flex;
	padding: 18px 8px 0 8px;
}
.namebox{
	width: 176px;
	height: 46px;
	background: #fff;
	border: 1px solid #c6c6c6;
	display: flex;
	align-items: center;
	justify-content: space-between;
	padding: 0 11px 0 7px;
	font-size: 25px;
}
.namebox span{
	margin-top: 3px;
}
.down-tri{
	border: 5px solid transparent;
	border-top: 6px solid #777;
	border-bottom: 0;
	margin-top: -2px;
}
.f-grip,.h-grip{
	display: flex;
	flex-direction: column;
	justify-content: center;
	gap: 4px;
}
.f-grip{
	width: 53px;
	height: 46px;
	align-items: center;
}
.f-grip i,.h-grip i{
	width: 3px;
	height: 3px;
	background: #aaa;
}
.f-buttons{
	width: 190px;
	height: 46px;
	background: #fff;
	border: 1px solid #c6c6c6;
	display: flex;
	align-items: center;
	justify-content: space-between;
	padding: 0 20px 0 23px;
}
.fx{
	font: italic 700 24px "Liberation Serif", serif;
	color: #8a8a8a;
}
.f-input{
	flex: 1;
	height: 46px;
	margin-left: 6px;
	background: #fff;
	border: 1px solid #c6c6c6;
	display: flex;
	align-items: center;
	justify-content: flex-end;
	padding-right: 9px;
}

/* sheet */
.sheet{
	height: 972px;
	flex: none;
	display: flex;
	background: #fff;
}
.grid{
	width: 1691px;
	flex: none;
	height: 972px;
	overflow: hidden;
	position: relative;
	border-right: 1px solid #9e9e9e;
	font-size: 24px;
	color: #111;
}
.col-heads{
	display: grid;
	grid-template-columns: 54px repeat(13, 128px);
	height: 41px;
	background: #e6e6e6;
	border-bottom: 1px solid #9e9e9e;
	width: 1718px;
}
.corner{
	border-right: 1px solid #b0b0b0;
	padding: 5px 0 0 17px;
}
.corner i{
	width: 0;
	height: 0;
	border-left: 33px solid transparent;
	border-bottom: 32px solid #b5b5b5;
}
.col-head{
	text-align: center;
	line-height: 35px;
	border-right: 1px solid #b4b4b4;
	font-size: 23px;
}
.col-head.on{
	background: #d2d2d2;
	color: #217346;
	border-bottom: 2px solid #217346;
	height: 41px;
}
.row{
	display: flex;
	height: 41px;
}
.row-num{
	width: 54px;
	flex: none;
	background: #e6e6e6;
	border-right: 1px solid #9e9e9e;
	border-bottom: 1px solid #c6c6c6;
	text-align: center;
	line-height: 42px;
}
.row-num.on{
	background: #d2d2d2;
	color: #217346;
	border-right: 2px solid #217346;
}
.cells{
	flex: 1;
	padding-left: 4px;
	font-size: 25px;
	line-height: 40px;
	border-bottom: 1px solid #d4d4d4;
	background: repeating-linear-gradient(90deg, transparent 0, transparent 127px, #d4d4d4 127px, #d4d4d4 128px);
	white-space: nowrap;
}
.active-cell{
	position: absolute;
	left: 693px;
	top: 286px;
	width: 130px;
	height: 42px;
	border: 2px solid #217346;
}
.active-cell i{
	position: absolute;
	right: -4px;
	bottom: -4px;
	width: 8px;
	height: 8px;
	background: #217346;
	outline: 1px solid #fff;
}
.vscroll{
	flex: 1;
	background: linear-gradient(#e6e6e6 0, #e6e6e6 41px, #dbdbdb 41px);
	padding: 1px 3px 0;
	display: flex;
	flex-direction: column;
}
.sbtn{
	width: 29px;
	height: 28px;
	background: #fff;
	border: 2px solid #b5b5b5;
	flex: none;
	display: flex;
	align-items: center;
	justify-content: center;
}
.sbtn.down{
	margin-top: auto;
	margin-bottom: -1px;
}
.vthumb{
	height: 199px;
	margin-top: 57px;
	background: #fff;
	border: 2px solid #b5b5b5;
}
.tri-up{
	border: 7px solid transparent;
	border-top: 0;
	border-bottom: 8px solid #777;
}
.tri-down{
	border: 7px solid transparent;
	border-bottom: 0;
	border-top: 8px solid #777;
}
.tri-left{
	border: 7px solid transparent;
	border-left: 0;
	border-right: 8px solid #777;
}
.tri-right{
	border: 7px solid transparent;
	border-right: 0;
	border-left: 8px solid #777;
}

/* sheet tabs */
.sheetbar{
	height: 38px;
	flex: none;
	background: #e6e6e6;
	border-top: 1px solid #9e9e9e;
	display: flex;
	align-items: flex-start;
	position: relative;
	z-index: 1;
}
.nav-left{
	border: 6px solid transparent;
	border-left: 0;
	border-right: 7px solid #c8c8c8;
	margin: 11px 0 0 31px;
}
.nav-right{
	border: 6px solid transparent;
	border-right: 0;
	border-left: 7px solid #c8c8c8;
	margin: 11px 0 0 30px;
}
.sheet-tab{
	width: 99px;
	height: 33px;
	margin: -1px 0 0 52px;
	background: #fff;
	border-left: 1px solid #9e9e9e;
	border-right: 1px solid #9e9e9e;
	border-bottom: 2px solid #217346;
	color: #217346;
	text-align: center;
	line-height: 33px;
	font-size: 22px;
}
.add-sheet{
	margin: 6px 0 0 43px;
}
.h-grip{
	margin-left: 739px;
	height: 36px;
	width: 3px;
}
.hscroll{
	margin: 3px 0 0 19px;
	width: 639px;
	height: 30px;
	display: flex;
	background: #d9d9d9;
}
.sbtn.h{
	height: 30px;
}
.hthumb{
	width: 533px;
	margin-right: 49px;
	background: #fff;
	border: 2px solid #b5b5b5;
}

/* status bar */
.statusbar{
	height: 38px;
	flex: none;
	border-top: 2px solid #c8c6c4;
	background: #f3f2f1;
	display: flex;
	align-items: center;
	position: relative;
	z-index: 1;
}
.ready{
	margin-left: 14px;
	width: 1162px;
	color: #555;
}
.view{
	width: 70px;
	height: 36px;
	display: flex;
	align-items: center;
	justify-content: center;
}
.view.on{
	background: #c8c6c4;
}
.zoom-sign{
	margin-left: 11px;
	width: 12px;
	text-align: center;
	color: #555;
}
.slider{
	width: 173px;
	height: 3px;
	margin-left: 11px;
	background: #aaa;
	position: relative;
}
.slider i{
	position: absolute;
	left: 82px;
	top: -9px;
	width: 9px;
	height: 20px;
	background: #777;
}
.zoom-sign.plus{
	margin-left: 10px;
}
.zoom-val{
	margin-left: 25px;
	font-size: 21px;
	color: #555;
	white-space: nowrap;
}
```
